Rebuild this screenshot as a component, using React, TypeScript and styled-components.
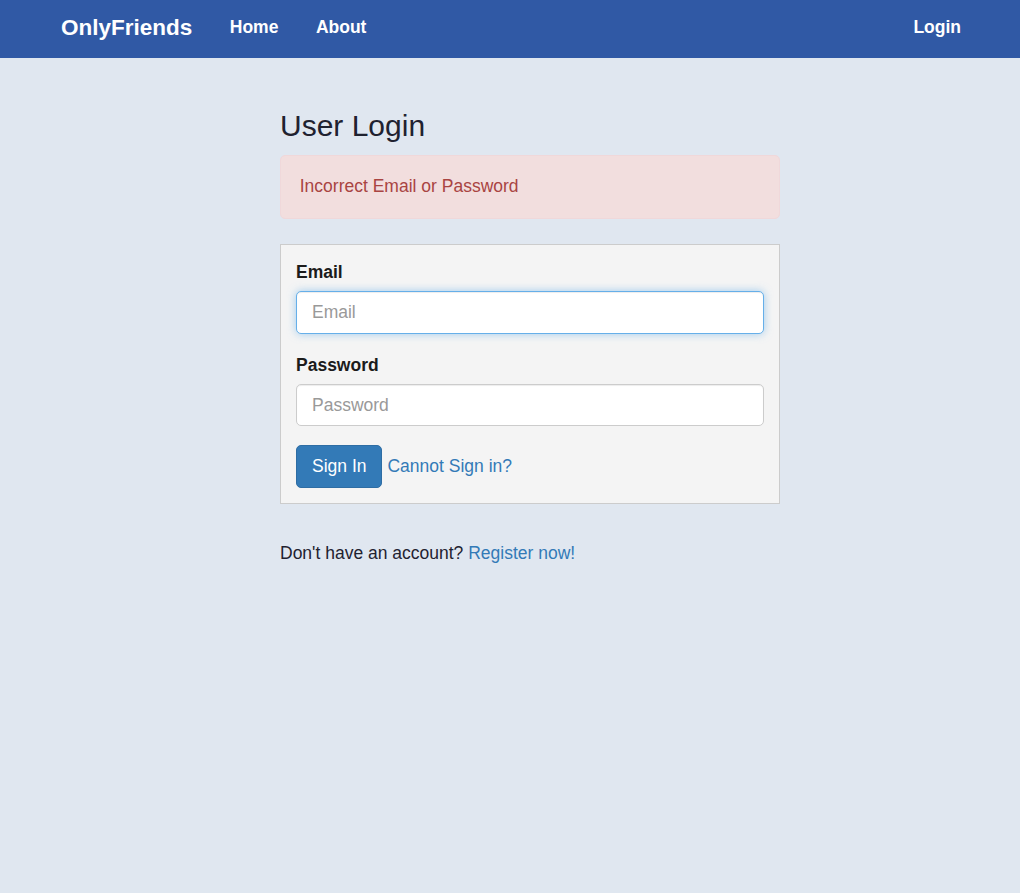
import React from "react";
import styled, { createGlobalStyle, css } from "styled-components";

const GlobalStyle = createGlobalStyle`
  html, body {
    margin: 0;
    padding: 0;
    background: #e0e7f0;
    font-family: "Liberation Sans", Arial, Helvetica, sans-serif;
    font-size: 17.5px;
    line-height: 25px;
    color: #222;
  }
  * { box-sizing: border-box; }
`;

const NavBar = styled.nav`
  height: 58px;
  background: #3059a5;
`;

const NavInner = styled.div`
  width: 937.5px;
  margin-left: calc(50% - 467.75px);
  height: 100%;
  padding-bottom: 3px;
  display: flex;
  align-items: center;
`;

const Brand = styled.a`
  font-size: 22.5px;
  font-weight: 700;
  color: #fff;
  padding: 0 18.75px;
  text-decoration: none;
  line-height: 25px;
`;

const NavLinks = styled.div<{ $right?: boolean }>`
  display: flex;
  ${(p) => p.$right && css`margin-left: auto;`}
`;

const NavLink = styled.a`
  font-size: 17.5px;
  font-weight: 700;
  color: #fff;
  padding: 0 18.75px;
  text-decoration: none;
  line-height: 25px;
`;

const Main = styled.main`
  width: 500px;
  margin-left: calc(50% - 230px);
  padding-top: 26px;
`;

const Title = styled.h3`
  font-size: 30px;
  font-weight: 400;
  line-height: 33px;
  color: #1f2230;
  margin: 25px 0 12.5px;
`;

const Alert = styled.div`
  background: #f2dede;
  color: #a94442;
  border: 1.25px solid #f0d8da;
  border-radius: 5px;
  padding: 18.75px;
  margin-bottom: 25px;
`;

const Well = styled.form`
  background: #f4f4f4;
  border: 1px solid #cccccc;
  padding: 15px;
`;

const FormGroup = styled.div`
  margin-bottom: 18.75px;
`;

const Label = styled.label`
  display: block;
  font-weight: 700;
  color: #1b1b1b;
  margin-bottom: 6.25px;
`;

const Input = styled.input<{ $focused?: boolean }>`
  display: block;
  width: 100%;
  height: 42.5px;
  padding: 7.5px 15px;
  font-family: inherit;
  font-size: 17.5px;
  color: #555;
  background: #fff;
  border: 1.25px solid #cccccc;
  border-radius: 5px;
  box-shadow: inset 0 1px 1px rgba(0, 0, 0, 0.075);
  outline: none;
  &::placeholder { color: #999; }
  ${(p) =>
    p.$focused &&
    css`
      border-color: #66afe9;
      box-shadow: inset 0 1px 1px rgba(0, 0, 0, 0.075), 0 0 8px rgba(102, 175, 233, 0.6);
    `}
`;

const Actions = styled.div`
  display: flex;
  align-items: center;
  gap: 5px;
`;

const Button = styled.button`
  height: 42.5px;
  padding: 7.5px 15px;
  font-family: inherit;
  font-size: 17.5px;
  line-height: 25px;
  color: #fff;
  background: #337ab7;
  border: 1.25px solid #2e6da4;
  border-radius: 5px;
`;

const Link = styled.a`
  color: #337ab7;
  text-decoration: none;
`;

const Footer = styled.p`
  margin: 37.5px 0 0;
  color: #1f2230;
`;

export default function App() {
  return (
    <>
      <GlobalStyle />
      <NavBar>
        <NavInner>
          <Brand href="#">OnlyFriends</Brand>
          <NavLinks>
            <NavLink href="#">Home</NavLink>
            <NavLink href="#">About</NavLink>
          </NavLinks>
          <NavLinks $right>
            <NavLink href="#">Login</NavLink>
          </NavLinks>
        </NavInner>
      </NavBar>
      <Main>
        <Title>User Login</Title>
        <Alert>Incorrect Email or Password</Alert>
        <Well onSubmit={(e) => e.preventDefault()}>
          <FormGroup>
            <Label htmlFor="email">Email</Label>
            <Input id="email" type="email" placeholder="Email" $focused />
          </FormGroup>
          <FormGroup>
            <Label htmlFor="password">Password</Label>
            <Input id="password" type="password" placeholder="Password" />
          </FormGroup>
          <Actions>
            <Button type="submit">Sign In</Button>
            <Link href="#">Cannot Sign in?</Link>
          </Actions>
        </Well>
        <Footer>
          Don't have an account? <Link href="#">Register now!</Link>
        </Footer>
      </Main>
    </>
  );
}
